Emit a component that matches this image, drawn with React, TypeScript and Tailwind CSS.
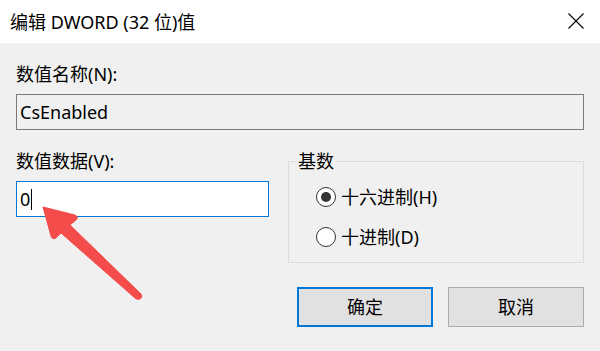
import React from "react";

const font = { fontFamily: '"Noto Sans", "Noto Sans CJK SC", sans-serif' };

function Radio({ checked, label }: { checked?: boolean; label: string }) {
  return (
    <div className="flex items-center h-[20px] ml-[27px]">
      <div className="w-[20px] h-[20px] rounded-full border border-[#333333] bg-white flex items-center justify-center">
        {checked && <div className="w-[10px] h-[10px] rounded-full bg-[#333333]" />}
      </div>
      <span className="ml-[5px] text-[18px] leading-[24px] text-black">{label}</span>
    </div>
  );
}

export default function App() {
  return (
    <div
      className="relative w-[600px] h-[351px] bg-[#f0f0f0] overflow-hidden text-black"
      style={font}
    >
      <div className="h-[43px] bg-white flex items-center justify-between pl-[10px] pr-[16px]">
        <span className="text-[18px] leading-[24px]">编辑 DWORD (32 位)值</span>
        <svg width="16" height="16" viewBox="0 0 16 16" className="mt-[-1px]">
          <path d="M0.5 0.5 L15.5 15.5 M15.5 0.5 L0.5 15.5" stroke="#000" strokeWidth="1.1" fill="none" />
        </svg>
      </div>

      <div className="px-[16px]">
        <div className="mt-[19px] text-[18px] leading-[24px]">数值名称(N):</div>
        <div className="mt-[8px] h-[36px] border border-[#7a7a7a] flex items-center pl-[3px] text-[18px]">
          CsEnabled
        </div>

        <div className="mt-[19px] flex gap-[19px]">
          <div className="w-[253px]">
            <div className="text-[18px] leading-[24px]">数值数据(V):</div>
            <div className="mt-[8px] h-[36px] border border-[#0078d7] bg-white flex items-center pl-[3px] text-[18px]">
              <span>0</span>
              <span className="ml-[1px] w-[1px] h-[21px] bg-black" />
            </div>
          </div>

          <div className="w-[296px]">
            <fieldset className="h-[114px] border border-[#dcdcdc] rounded-none">
              <legend className="ml-[7px] px-[2px] text-[18px] leading-[24px]">基数</legend>
              <div className="mt-[14px] flex flex-col gap-[20px]">
                <Radio checked label="十六进制(H)" />
                <Radio label="十进制(D)" />
              </div>
            </fieldset>
            <div className="mt-[24px] ml-[9px] flex gap-[15px]">
              <button className="w-[136px] h-[40px] border-2 border-[#0078d7] bg-[#e1e1e1] text-[18px]">
                确定
              </button>
              <button className="w-[136px] h-[40px] border border-[#adadad] bg-[#e1e1e1] text-[18px]">
                取消
              </button>
            </div>
          </div>
        </div>
      </div>

      <svg
        className="absolute left-0 top-0 pointer-events-none"
        width="600"
        height="351"
        viewBox="0 0 600 351"
      >
        <path
          d="M43 207 L75 215 Q79 217 76 220 L70 225 L141 294 Q143 297 140 299 Q137 300 135 298 L61 233 L56 238 Q52 240 51 236 Z"
          fill="#f44c4a"
          stroke="#f44c4a"
          strokeWidth="1"
          strokeLinejoin="round"
        />
      </svg>
    </div>
  );
}
